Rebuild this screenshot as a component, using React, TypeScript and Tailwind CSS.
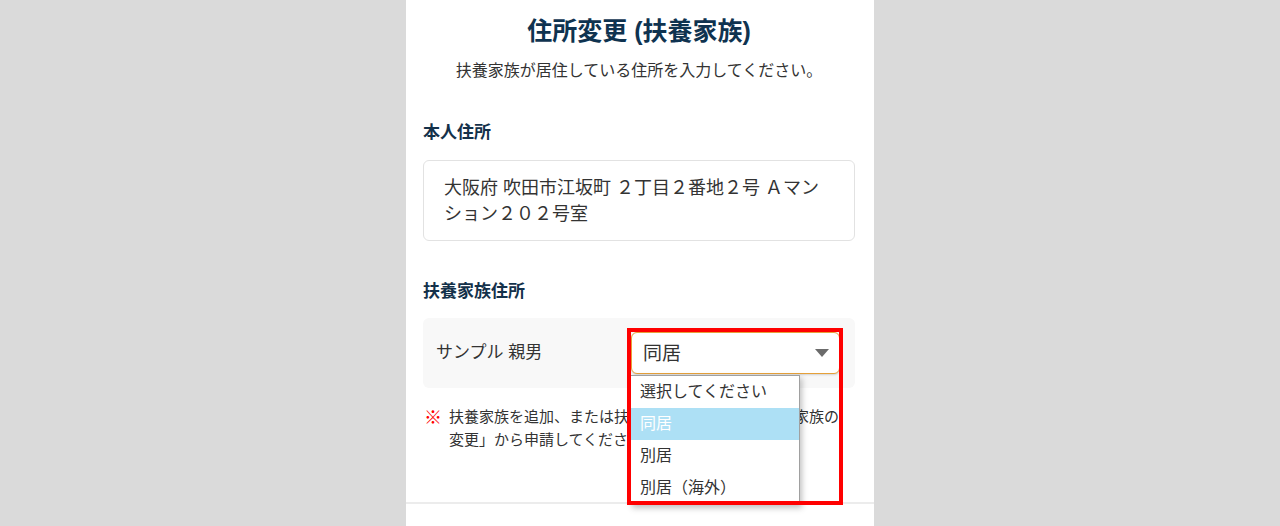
const font = { fontFamily: '"Liberation Sans", "Noto Sans CJK JP", sans-serif' };

const options = ['選択してください', '同居', '別居', '別居（海外）'];

function Caret() {
  return (
    <svg width="14" height="8" viewBox="0 0 14 8" className="shrink-0">
      <path d="M0 0 L14 0 L7 8 Z" fill="#6b6b6b" />
    </svg>
  );
}

function RelationSelect() {
  return (
    <div className="relative w-[209px]">
      <div className="flex h-[42px] items-center justify-between rounded-md border-[1.5px] border-[#e6a13a] bg-white pl-[11px] pr-[10px] shadow-[0_1px_2px_rgba(0,0,0,0.15)]">
        <span className="text-[19px] leading-none text-[#333]">同居</span>
        <Caret />
      </div>

      {/* native-looking open option list */}
      <ul className="absolute left-[-1px] top-full z-10 mt-[1px] w-[170px] border border-[#a0a0a0] bg-white shadow-[2px_3px_6px_rgba(0,0,0,0.25)]">
        {options.map((o) => (
          <li
            key={o}
            className={
              o === '同居'
                ? 'flex h-[32px] items-center bg-[#ade0f5] pl-[9px] text-[16px] text-white'
                : 'flex h-[32px] items-center pl-[9px] text-[16px] text-[#333]'
            }
          >
            {o}
          </li>
        ))}
      </ul>

      {/* annotation frame */}
      <div className="pointer-events-none absolute left-[-4px] top-[-4px] z-20 h-[177px] w-[216px] border-4 border-[#ff0000]" />
    </div>
  );
}

export default function App() {
  return (
    <div className="flex h-[526px] w-full justify-center overflow-hidden bg-[#dadada]" style={font}>
      <div className="flex w-[468px] flex-col bg-white">
        <div className="flex flex-col pl-[17px] pr-[19px] pt-[15px]">
          <h1 className="text-center text-[25px] font-bold leading-[32px] text-[#0f3350]">
            住所変更 (扶養家族)
          </h1>
          <p className="mt-[12px] text-center text-[16px] leading-[24px] text-[#333]">
            扶養家族が居住している住所を入力してください。
          </p>

          <h2 className="mt-[38px] text-[17px] font-bold leading-[24px] text-[#14314a]">本人住所</h2>
          <div className="mt-[15px] h-[81px] rounded-md border border-[#e2e2e2] pl-[20px] pr-[16px] pt-[14px] text-[18px] leading-[26px] text-[#333]">
            大阪府 吹田市江坂町 ２丁目２番地２号 Ａマン
            <br />
            ション２０２号室
          </div>

          <h2 className="mt-[39px] text-[17px] font-bold leading-[24px] text-[#14314a]">扶養家族住所</h2>
          <div className="mt-[14px] flex h-[70px] items-center justify-between rounded-md bg-[#f8f8f8] pl-[13px] pr-[15px]">
            <span className="text-[17px] text-[#333]">サンプル 親男</span>
            <RelationSelect />
          </div>

          <div className="mt-[17px] flex gap-[7px] pl-[1px] text-[15px] leading-[23px] text-[#333]">
            <span className="shrink-0 font-['Noto_Sans_CJK_JP'] text-[18px] font-black leading-[23px] text-[#ff0000]">※</span>
            <p className="mr-[10px]">扶養家族を追加、または扶養から外す場合は「扶養家族の変更」から申請してください。</p>
          </div>
        </div>

        <div className="mt-[51px] border-t-2 border-[#ececec]" />
      </div>
    </div>
  );
}
